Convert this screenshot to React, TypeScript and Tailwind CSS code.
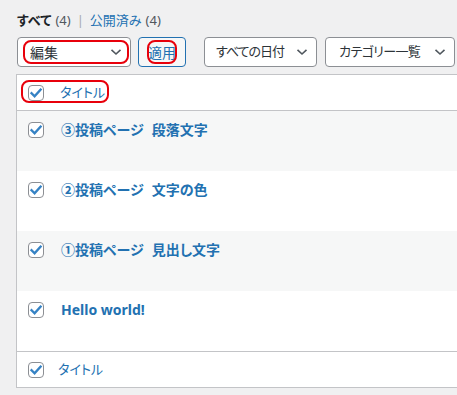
import React from "react";

const font = {
  fontFamily: '"Noto Sans", "Noto Sans CJK JP", sans-serif',
};

function Check() {
  return (
    <span className="relative flex h-4 w-4 shrink-0 items-center justify-center rounded-[4px] border border-[#8c8f94] bg-white">
      <svg width="16" height="16" viewBox="0 0 16 16" className="absolute left-[-1px] top-[-1px]">
        <path d="M3.6 8.3 L6.6 11.3 L12.6 4.6" fill="none" stroke="#3582c4" strokeWidth="2.4" strokeLinecap="square" />
      </svg>
    </span>
  );
}

function Chevron() {
  return (
    <svg width="12" height="8" viewBox="0 0 12 8" className="shrink-0">
      <path d="M1.5 1.8 L6 6 L10.5 1.8" fill="none" stroke="#50575e" strokeWidth="1.6" />
    </svg>
  );
}

function Select({ label, w, pl = "pl-[12px]", text = "text-[14px]" }: { label: string; w: string; pl?: string; text?: string }) {
  return (
    <div className={`flex h-[30px] items-center justify-between whitespace-nowrap rounded-[4px] border border-[#8c8f94] bg-white pr-[8px] ${pl} ${w}`}>
      <span className={`text-[#2c3338] ${text}`}>{label}</span>
      <Chevron />
    </div>
  );
}

const rows: [string, string][] = [
  ["③投稿ページ", "段落文字"],
  ["②投稿ページ", "文字の色"],
  ["①投稿ページ", "見出し文字"],
  ["Hello world!", ""],
];

export default function App() {
  return (
    <div
      className="min-h-[395px] w-[457px] overflow-hidden bg-[#f0f0f1] [font-feature-settings:'palt']"
      style={font}
    >
      <div className="flex h-[30px] items-center whitespace-nowrap pl-[17px] pt-[10px] text-[13px] leading-none">
        <span className="font-bold text-[#1d2327]">すべて</span>
        <span className="ml-[4px] text-[#50575e]">(4)</span>
        <span className="mx-[6px] text-[#a7aaad]">|</span>
        <span className="text-[#2271b1]">公開済み</span>
        <span className="ml-[4px] text-[#50575e]">(4)</span>
      </div>

      <div className="mt-[7px] flex items-center pl-[17px]">
        <div className="relative">
          <Select label="編集" w="w-[114px]" />
          <div className="pointer-events-none absolute left-[6px] top-[3px] h-[24px] w-[106px] rounded-[8px] border-[2px] border-[#e8000b]" />
        </div>
        <div className="relative ml-[7px] flex h-[30px] w-[48px] items-center justify-center rounded-[4px] border border-[#2271b1] bg-[#f6f7f7] text-[14px] text-[#2271b1]">
          適用
          <div className="pointer-events-none absolute left-[8px] top-[2px] h-[24px] w-[30px] rounded-[8px] border-[2px] border-[#e8000b]" />
        </div>
        <div className="ml-[18px]">
          <Select label="すべての日付" w="w-[113px]" pl="pl-[11px]" text="text-[13px] tracking-[-1px]" />
        </div>
        <div className="ml-[8px]">
          <Select label="カテゴリー一覧" w="w-[130px]" pl="pl-[13px]" text="text-[13px] tracking-[-0.6px]" />
        </div>
      </div>

      <div className="ml-[16px] mt-[7px] w-[480px] border border-[#c3c4c7] bg-white">
        <div className="flex h-[36px] items-center border-b border-[#c3c4c7] pl-[11px]">
          <div className="relative flex items-center">
            <Check />
            <span className="ml-[16px] text-[13px] text-[#2271b1]">タイトル</span>
            <div className="pointer-events-none absolute left-[-7px] top-[-3px] h-[23px] w-[88px] rounded-[8px] border-[2px] border-[#e8000b]" />
          </div>
        </div>
        {rows.map((r, i) => (
          <div key={i} className={`flex h-[60px] items-start pl-[11px] pt-[11px] ${i % 2 === 0 ? "bg-[#f6f7f7]" : "bg-white"}`}>
            <Check />
            <span className="ml-[17px] mt-[-3px] whitespace-nowrap text-[14px] font-bold text-[#2271b1]">
              {r[0]}
              {r[1] && <span className="ml-[8px]">{r[1]}</span>}
            </span>
          </div>
        ))}
        <div className="flex h-[36px] items-center border-t border-[#c3c4c7] pl-[11px]">
          <Check />
          <span className="ml-[14px] text-[13px] text-[#2271b1]">タイトル</span>
        </div>
      </div>
    </div>
  );
}
